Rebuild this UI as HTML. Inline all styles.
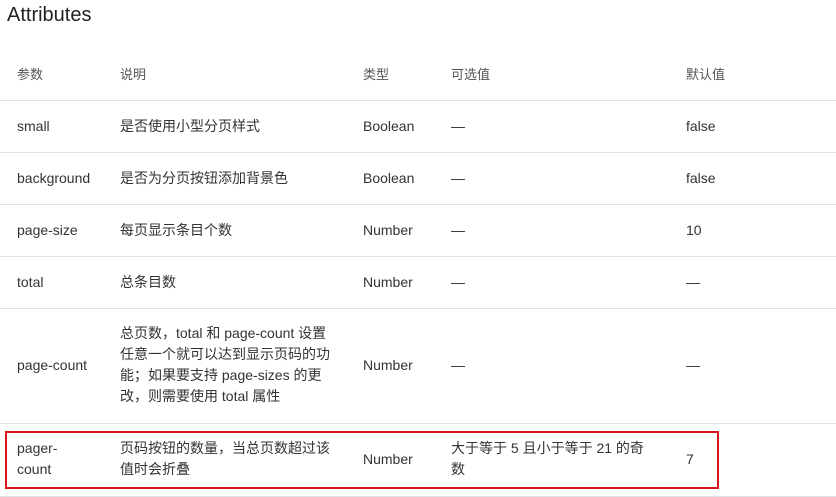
<!DOCTYPE html>
<html><head><meta charset="utf-8"><style>
body{margin:0;width:836px;height:497px;background:#fff;font-family:"Liberation Sans","Noto Sans CJK SC",sans-serif;color:#333;font-size:14px;position:relative;overflow:hidden}
.t{position:absolute;left:7px;top:4px;font-size:20px;color:#222}
.l{position:absolute;left:0;width:836px;height:1px;background:#dfe2e5}
.c{position:absolute;line-height:21px;color:#333;white-space:nowrap}
.hd{color:#555;font-size:13px}
.box{position:absolute;left:5px;top:431px;width:710px;height:54px;border:2px solid #d7141c}
</style></head><body>
<div class="t">Attributes</div>
<div class="c hd" style="left:17px;top:64px">参数</div>
<div class="c hd" style="left:120px;top:64px">说明</div>
<div class="c hd" style="left:363px;top:64px">类型</div>
<div class="c hd" style="left:451px;top:64px">可选值</div>
<div class="c hd" style="left:686px;top:64px">默认值</div>
<div class="l" style="top:100px"></div>
<div class="c" style="left:17px;top:116px">small</div><div class="c" style="left:120px;top:116px">是否使用小型分页样式</div><div class="c" style="left:363px;top:116px">Boolean</div><div class="c" style="left:451px;top:116px">—</div><div class="c" style="left:686px;top:116px">false</div>
<div class="l" style="top:152px"></div>
<div class="c" style="left:17px;top:168px">background</div><div class="c" style="left:120px;top:168px">是否为分页按钮添加背景色</div><div class="c" style="left:363px;top:168px">Boolean</div><div class="c" style="left:451px;top:168px">—</div><div class="c" style="left:686px;top:168px">false</div>
<div class="l" style="top:204px"></div>
<div class="c" style="left:17px;top:220px">page-size</div><div class="c" style="left:120px;top:220px">每页显示条目个数</div><div class="c" style="left:363px;top:220px">Number</div><div class="c" style="left:451px;top:220px">—</div><div class="c" style="left:686px;top:220px">10</div>
<div class="l" style="top:256px"></div>
<div class="c" style="left:17px;top:272px">total</div><div class="c" style="left:120px;top:272px">总条目数</div><div class="c" style="left:363px;top:272px">Number</div><div class="c" style="left:451px;top:272px">—</div><div class="c" style="left:686px;top:272px">—</div>
<div class="l" style="top:308px"></div>
<div class="c" style="left:17px;top:355px">page-count</div>
<div class="c" style="left:120px;top:323px">总页数，total 和 page-count 设置<br>任意一个就可以达到显示页码的功<br>能；如果要支持 page-sizes 的更<br>改，则需要使用 total 属性</div>
<div class="c" style="left:363px;top:355px">Number</div><div class="c" style="left:451px;top:355px">—</div><div class="c" style="left:686px;top:355px">—</div>
<div class="l" style="top:423px"></div>
<div class="c" style="left:17px;top:438px">pager-<br>count</div>
<div class="c" style="left:120px;top:438px">页码按钮的数量，当总页数超过该<br>值时会折叠</div>
<div class="c" style="left:363px;top:449px">Number</div>
<div class="c" style="left:451px;top:438px">大于等于 5 且小于等于 21 的奇<br>数</div>
<div class="c" style="left:686px;top:449px">7</div>
<div class="box"></div>
<div class="l" style="top:496px"></div>
</body></html>
